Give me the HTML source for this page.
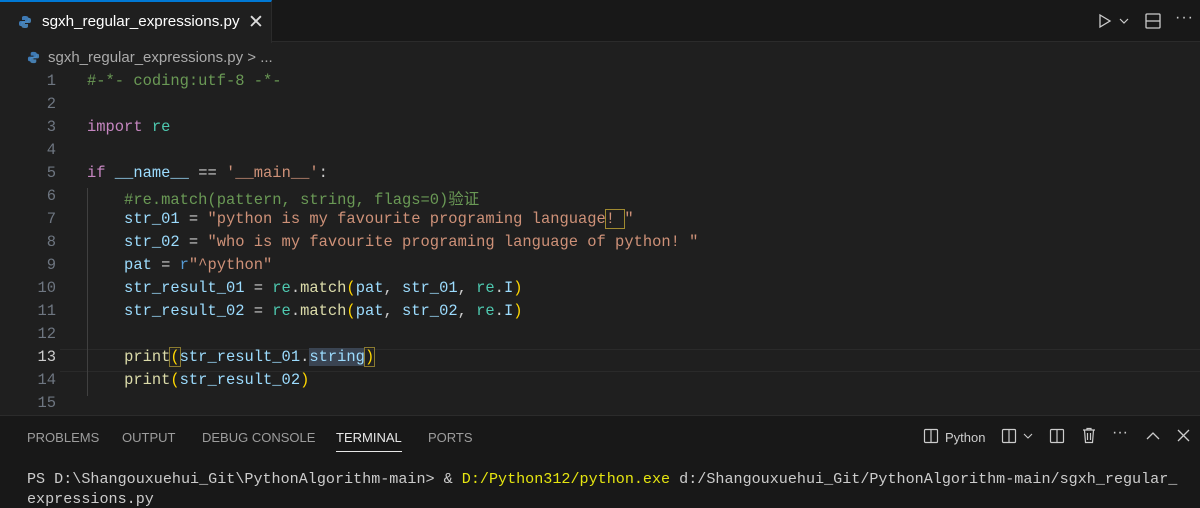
<!DOCTYPE html>
<html><head><meta charset="utf-8"><style>
*{margin:0;padding:0;box-sizing:border-box}
body{width:1200px;height:508px;overflow:hidden;background:#1f1f1f;font-family:"Liberation Sans","Noto Sans CJK SC",sans-serif;color:#ccc;position:relative}
.tabbar{position:absolute;left:0;top:0;width:1200px;height:42px;background:#181818;border-bottom:1px solid #2b2b2b}
.tab{position:absolute;left:0;top:0;width:272px;height:43px;background:#1f1f1f;border-top:2px solid #0078d4;border-right:1px solid #2b2b2b}
.tab span{position:absolute;left:42px;top:11px;font-size:15.2px;color:#fff}
.tab .x{left:248px;top:9px;font-size:19px;color:#ddd}
.crumb{position:absolute;left:48px;top:49px;font-size:15px;color:#aaa}
.code{position:absolute;left:0;top:72px;font-family:"Liberation Mono","Noto Sans CJK SC",monospace;font-size:15.45px}
.ln{position:absolute;left:0;width:56px;text-align:right;color:#6e7681}
.ln.cur{color:#ccc}
.tx{position:absolute;left:87px;white-space:pre;color:#9cdcfe}
.c{color:#6a9955}.k{color:#c586c0}.s{color:#ce9178}.v{color:#9cdcfe}.f{color:#dcdcaa}.m{color:#4ec9b0}.w{color:#ccc}.y{color:#ffd700}.b{color:#569cd6}
.panel{position:absolute;left:0;top:415px;width:1200px;height:93px;background:#181818;border-top:1px solid #2b2b2b}
.ptab{position:absolute;top:14px;font-size:13px;color:#9d9d9d}
.term{position:absolute;left:27px;font-family:"Liberation Mono",monospace;font-size:15.1px;color:#ccc;white-space:pre}
</style></head><body>
<div class="tabbar">
 <div class="tab">
  <svg style="position:absolute;left:18px;top:13px" width="14" height="14" viewBox="0 0 14 14"><path d="M7 1C4 1 4 2 4 3v2h3v1H2.5C1 6 1 8 1 8.5S1 11 2.5 11H4V9.5C4 8 5 7.5 6 7.5h3c1 0 1.5-.5 1.5-1.5V3C10.5 1.5 9 1 7 1z" fill="#3e7ab5"/><path d="M7 13c3 0 3-1 3-2V9H7V8h4.5C13 8 13 6 13 5.5S13 3 11.5 3H10v1.5C10 6 9 6.5 8 6.5H5C4 6.5 3.5 7 3.5 8v3C3.5 12.5 5 13 7 13z" fill="#4d8fc9" opacity=".85"/></svg>
  <span>sgxh_regular_expressions.py</span><span class="x">✕</span>
 </div>
 <svg style="position:absolute;left:1097px;top:13px" width="16" height="16" viewBox="0 0 16 16" fill="none" stroke="#ccc" stroke-width="1.3"><path d="M3 2l10 6-10 6z"/></svg>
 <svg style="position:absolute;left:1119px;top:17px" width="10" height="8" viewBox="0 0 10 8" fill="none" stroke="#ccc" stroke-width="1.2"><path d="M1 2l4 4 4-4"/></svg>
 <svg style="position:absolute;left:1144px;top:12px" width="18" height="18" viewBox="0 0 18 18" fill="none" stroke="#ccc" stroke-width="1.3"><rect x="2" y="2" width="14" height="14" rx="1"/><path d="M2 9h14"/></svg>
 <span style="position:absolute;left:1175px;top:9px;font-size:16px;color:#ccc;letter-spacing:1px">···</span>
</div>
<svg style="position:absolute;left:27px;top:51px" width="13" height="13" viewBox="0 0 14 14"><path d="M7 1C4 1 4 2 4 3v2h3v1H2.5C1 6 1 8 1 8.5S1 11 2.5 11H4V9.5C4 8 5 7.5 6 7.5h3c1 0 1.5-.5 1.5-1.5V3C10.5 1.5 9 1 7 1z" fill="#3e7ab5"/><path d="M7 13c3 0 3-1 3-2V9H7V8h4.5C13 8 13 6 13 5.5S13 3 11.5 3H10v1.5C10 6 9 6.5 8 6.5H5C4 6.5 3.5 7 3.5 8v3C3.5 12.5 5 13 7 13z" fill="#4d8fc9" opacity=".85"/></svg>
<div class="crumb">sgxh_regular_expressions.py &gt; ...</div>
<div style="position:absolute;left:60px;top:349px;width:1140px;height:23px;border-top:1px solid #2a2a2a;border-bottom:1px solid #2a2a2a"></div>
<div style="position:absolute;left:87px;top:188px;width:1px;height:208px;background:#404040"></div>
<div class="code">
<div class="ln" style="top:0px">1</div><div class="tx c" style="top:0px">#-*- coding:utf-8 -*-</div>
<div class="ln" style="top:23px">2</div>
<div class="ln" style="top:46px">3</div><div class="tx" style="top:46px"><span class="k">import</span> <span class="m">re</span></div>
<div class="ln" style="top:69px">4</div>
<div class="ln" style="top:92px">5</div><div class="tx" style="top:92px"><span class="k">if</span> <span class="v">__name__</span> <span class="w">==</span> <span class="s">'__main__'</span><span class="w">:</span></div>
<div class="ln" style="top:115px">6</div><div class="tx c" style="top:115px">    #re.match(pattern, string, flags=0)验证</div>
<div class="ln" style="top:138px">7</div><div class="tx" style="top:138px">    str_01 <span class="w">=</span> <span class="s">"python is my favourite programing language<span style="outline:1px solid #a08a30">! </span>"</span></div>
<div class="ln" style="top:161px">8</div><div class="tx" style="top:161px">    str_02 <span class="w">=</span> <span class="s">"who is my favourite programing language of python! "</span></div>
<div class="ln" style="top:184px">9</div><div class="tx" style="top:184px">    pat <span class="w">=</span> <span class="b">r</span><span class="s">"^python"</span></div>
<div class="ln" style="top:207px">10</div><div class="tx" style="top:207px">    str_result_01 <span class="w">=</span> <span class="m">re</span><span class="w">.</span><span class="f">match</span><span class="y">(</span>pat<span class="w">,</span> str_01<span class="w">,</span> <span class="m">re</span><span class="w">.</span>I<span class="y">)</span></div>
<div class="ln" style="top:230px">11</div><div class="tx" style="top:230px">    str_result_02 <span class="w">=</span> <span class="m">re</span><span class="w">.</span><span class="f">match</span><span class="y">(</span>pat<span class="w">,</span> str_02<span class="w">,</span> <span class="m">re</span><span class="w">.</span>I<span class="y">)</span></div>
<div class="ln" style="top:253px">12</div>
<div class="ln cur" style="top:276px">13</div><div class="tx" style="top:276px">    <span class="f">print</span><span class="y" style="outline:1px solid #8a7a30">(</span>str_result_01<span class="w">.</span><span style="background:#3a4452">string</span><span class="y" style="outline:1px solid #8a7a30">)</span></div>
<div class="ln" style="top:299px">14</div><div class="tx" style="top:299px">    <span class="f">print</span><span class="y">(</span>str_result_02<span class="y">)</span></div>
<div class="ln" style="top:322px">15</div>
</div>
<div class="panel">
 <span class="ptab" style="left:27px">PROBLEMS</span>
 <span class="ptab" style="left:122px">OUTPUT</span>
 <span class="ptab" style="left:202px">DEBUG CONSOLE</span>
 <span class="ptab" style="left:336px;color:#e7e7e7">TERMINAL<span style="position:absolute;left:0;right:0;top:21px;height:1px;background:#e7e7e7"></span></span>
 <span class="ptab" style="left:428px">PORTS</span>
 <svg style="position:absolute;left:923px;top:12px" width="16" height="16" viewBox="0 0 16 16" fill="none" stroke="#ccc" stroke-width="1.2"><rect x="1.5" y="1.5" width="13" height="13" rx="1"/><path d="M8 1.5v13"/></svg>
 <span class="ptab" style="left:945px;color:#ccc">Python</span>
 <svg style="position:absolute;left:1001px;top:12px" width="16" height="16" viewBox="0 0 16 16" fill="none" stroke="#ccc" stroke-width="1.2"><rect x="1.5" y="1.5" width="13" height="13" rx="1"/><path d="M8 1.5v13"/></svg>
 <svg style="position:absolute;left:1023px;top:17px" width="10" height="7" viewBox="0 0 10 7" fill="none" stroke="#ccc" stroke-width="1.1"><path d="M1 1l4 4 4-4"/></svg>
 <svg style="position:absolute;left:1049px;top:12px" width="16" height="16" viewBox="0 0 16 16" fill="none" stroke="#ccc" stroke-width="1.2"><rect x="1.5" y="1.5" width="13" height="13" rx="1"/><path d="M8 1.5v13"/></svg>
 <svg style="position:absolute;left:1081px;top:11px" width="16" height="17" viewBox="0 0 16 17" fill="none" stroke="#ccc" stroke-width="1.2"><path d="M2 3h12M6 3V1.5h4V3M3.5 3l1 12.5h7l1-12.5M6.5 6v7M9.5 6v7"/></svg>
 <span style="position:absolute;left:1112px;top:8px;font-size:16px;color:#ccc">···</span>
 <svg style="position:absolute;left:1146px;top:15px" width="14" height="9" viewBox="0 0 14 9" fill="none" stroke="#ccc" stroke-width="1.3"><path d="M1 8l6-6 6 6"/></svg>
 <svg style="position:absolute;left:1177px;top:13px" width="13" height="13" viewBox="0 0 13 13" fill="none" stroke="#ccc" stroke-width="1.3"><path d="M1 1l11 11M12 1L1 12"/></svg>
 <div class="term" style="top:54px">PS D:\Shangouxuehui_Git\PythonAlgorithm-main&gt; &amp; <span style="color:#e5e510">D:/Python312/python.exe</span> d:/Shangouxuehui_Git/PythonAlgorithm-main/sgxh_regular_</div>
 <div class="term" style="top:74px">expressions.py</div>
</div>
</body></html>
